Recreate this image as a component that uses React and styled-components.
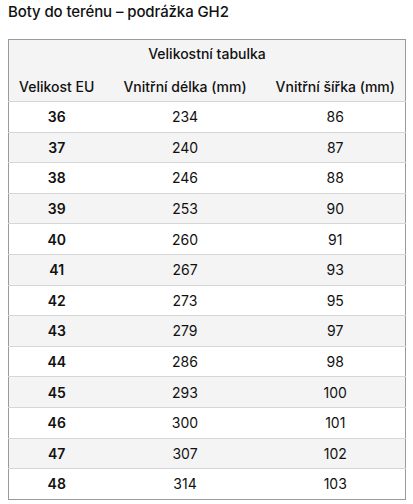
import React from "react";
import styled, { createGlobalStyle } from "styled-components";

const sizes = [
  [36, 234, 86],
  [37, 240, 87],
  [38, 246, 88],
  [39, 253, 90],
  [40, 260, 91],
  [41, 267, 93],
  [42, 273, 95],
  [43, 279, 97],
  [44, 286, 98],
  [45, 293, 100],
  [46, 300, 101],
  [47, 307, 102],
  [48, 314, 103],
];

const GlobalStyle = createGlobalStyle`
  body {
    margin: 0;
    background: #fff;
    font-family: Inter, "Noto Sans", sans-serif;
    color: #111;
  }
`;

const Page = styled.div`
  padding: 3px 7px 0 8px;
`;

const Title = styled.h2`
  margin: 0 0 18px;
  font-size: 15px;
  font-weight: 500;
  line-height: 18px;
  letter-spacing: -0.1px;
`;

const Table = styled.table`
  width: 398px;
  border-collapse: collapse;
  border: 1px solid #9a9a9a;
  font-size: 14px;
  text-align: center;
`;

const HeadCell = styled.th`
  background: #f4f4f4;
  font-weight: 500;
  height: ${(p) => (p.$caption ? "27px" : "30px")};
  padding: ${(p) => (p.$caption ? "0 0 4px" : "0")};
  vertical-align: middle;
`;

const Row = styled.tr`
  background: ${(p) => (p.$shaded ? "#f4f4f4" : "#fff")};
  border-top: 1px solid #d6d6d6;
`;

const Cell = styled.td`
  height: 29.6px;
  padding: 0;
  font-weight: ${(p) => (p.$bold ? 600 : 400)};
`;

export default function App() {
  return (
    <Page>
      <GlobalStyle />
      <Title>Boty do terénu – podrážka GH2</Title>
      <Table>
        <colgroup>
          <col style={{ width: 96 }} />
          <col style={{ width: 161 }} />
          <col />
        </colgroup>
        <thead>
          <tr>
            <HeadCell $caption colSpan={3}>Velikostní tabulka</HeadCell>
          </tr>
          <tr>
            <HeadCell>Velikost EU</HeadCell>
            <HeadCell>Vnitřní délka (mm)</HeadCell>
            <HeadCell>Vnitřní šířka (mm)</HeadCell>
          </tr>
        </thead>
        <tbody>
          {sizes.map(([eu, len, wid], i) => (
            <Row key={eu} $shaded={i % 2 === 1}>
              <Cell $bold>{eu}</Cell>
              <Cell>{len}</Cell>
              <Cell>{wid}</Cell>
            </Row>
          ))}
        </tbody>
      </Table>
    </Page>
  );
}
